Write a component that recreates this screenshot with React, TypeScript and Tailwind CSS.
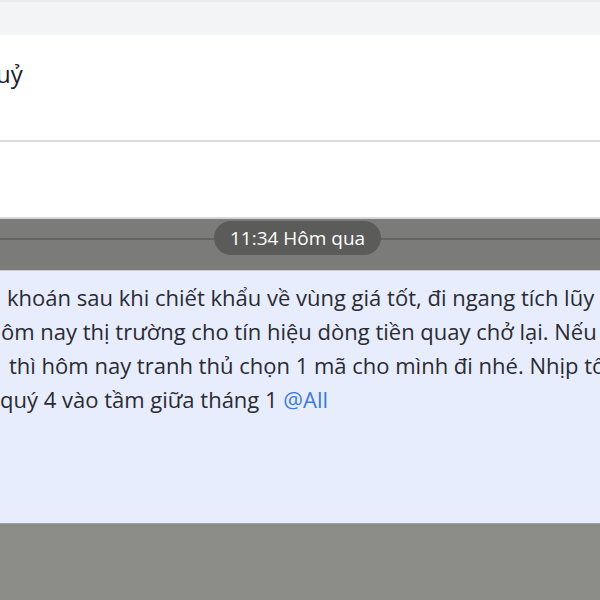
import React from "react";

export default function App() {
  const font = { fontFamily: '"Open Sans", "Noto Sans", sans-serif' };
  return (
    <div className="w-[600px] h-[600px] overflow-hidden flex flex-col bg-white" style={font}>
      <div className="h-[35px] shrink-0 bg-[#f3f4f6] border-t-2 border-[#e9eaed]" />
      <div className="h-[107px] shrink-0 bg-white border-b-2 border-[#dcdcdc] pt-[27px]">
        <span className="block text-[24px] leading-[24px] font-medium text-[#1b1d2b] -ml-[4px]">uỷ</span>
      </div>
      <div className="h-[75px] shrink-0 bg-white" />
      <div className="h-[53px] shrink-0 bg-[#7b7b79] border-t-2 border-[#d6d6d6] relative flex items-start justify-center pt-[2px]">
        <div className="absolute left-0 right-0 top-[19px] h-[2px] bg-[#636362]" />
        <div className="relative ml-[-5px] h-[34px] w-[167px] rounded-full bg-[#5b5b5a] flex items-center justify-center">
          <span className="text-[19px] text-white leading-none">11:34 Hôm qua</span>
        </div>
      </div>
      <div className="h-[253px] shrink-0 bg-[#e8edfd] border-t border-[#c9cbd2] pt-[9px] text-[22px] leading-[34px] text-[#2a2b33] whitespace-nowrap">
        <div className="pl-[7px]">khoán sau khi chiết khẩu về vùng giá tốt, đi ngang tích lũy</div>
        <div className="pl-[1px]">ôm nay thị trường cho tín hiệu dòng tiền quay chở lại. Nếu</div>
        <div className="pl-[9px]">thì hôm nay tranh thủ chọn 1 mã cho mình đi nhé. Nhịp tốt</div>
        <div className="pl-0">
          quý 4 vào tầm giữa tháng 1 <span className="text-[#3b7ae0]">@All</span>
        </div>
      </div>
      <div className="flex-1 bg-[#8c8c89] border-t border-[#9aa0aa]" />
    </div>
  );
}
